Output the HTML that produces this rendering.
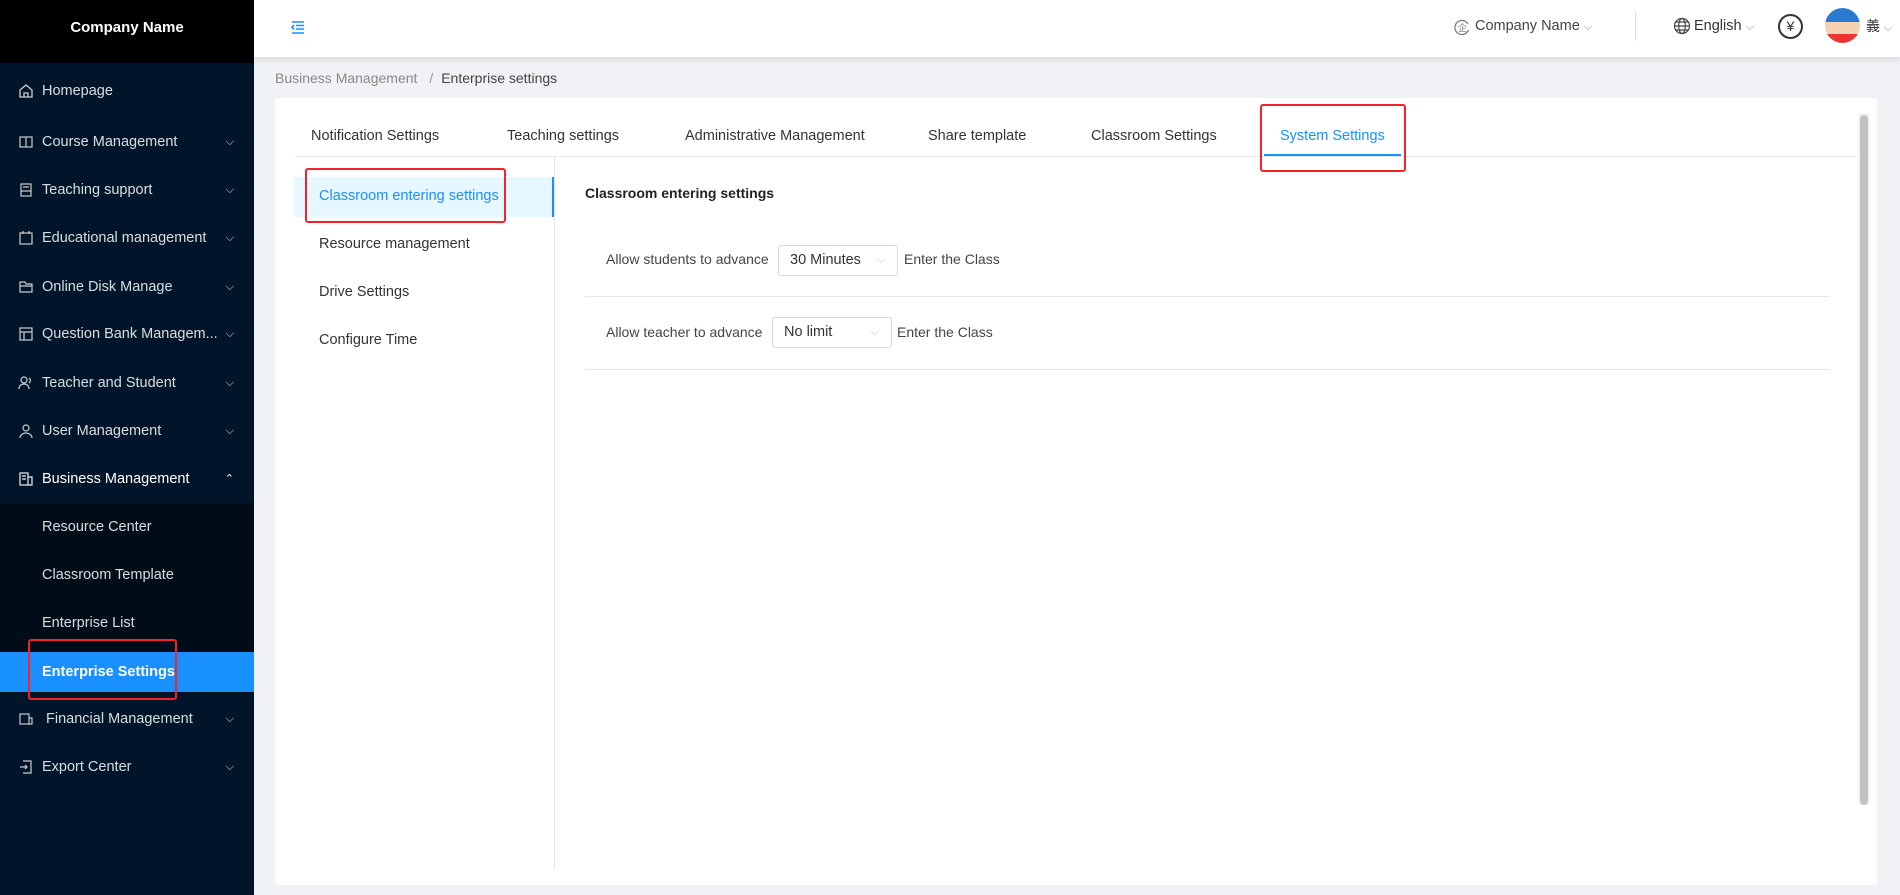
<!DOCTYPE html>
<html><head><meta charset="utf-8"><style>
*{box-sizing:border-box;margin:0;padding:0}
body{width:1900px;height:895px;overflow:hidden;background:#f0f2f5;font-family:"Liberation Sans","Noto Sans CJK SC",sans-serif;font-size:15px;color:#333;position:relative}
.side{position:absolute;left:0;top:0;width:254px;height:895px;background:#001529}
.logo{height:63px;background:#000;color:#fff;text-align:center;line-height:56px;font-size:15px;font-weight:bold}
.mi{position:absolute;left:0;width:254px;height:40px;line-height:40px;color:rgba(255,255,255,.85);font-size:14.5px;padding-left:42px}
.mi svg.ic{position:absolute;left:18px;top:12px}
.mi .ar{position:absolute;right:20px;top:0;font-size:11px}
.sub{position:absolute;left:0;top:503px;width:254px;height:191px;background:#000c17}
.sel{background:#1890ff;color:#fff;font-weight:bold}
.top{position:absolute;left:254px;top:0;right:0;height:57px;background:#fff;box-shadow:0 2px 6px rgba(0,0,0,.12)}
.abs{position:absolute;white-space:nowrap}
.card{position:absolute;left:275px;top:98px;width:1602px;height:787px;background:#fff;border-radius:3px}
.red{position:absolute;border:2px solid #f5222d;border-radius:3px}
.sel2{position:absolute;height:31px;border:1px solid #d9d9d9;border-radius:3px;font-size:14.5px;line-height:29px;padding-left:11px;color:#333}
.sel2 span{position:absolute;right:12px;color:#bbb;font-size:11px}
.tab{position:absolute;top:30px;font-size:14.5px;color:#333;white-space:nowrap}
</style></head><body>
<div class="side">
<div class="logo">Company Name</div>
<div class="sub"></div>
<div class="mi" style="top:71px"><svg class="ic" width="16" height="16" viewBox="0 0 16 16" fill="none" stroke="#ccc" stroke-width="1.3"><path d="M2 7L8 2l6 5v7H2z M6 14v-4h4v4"/></svg>Homepage</div>
<div class="mi" style="top:122px"><svg class="ic" width="16" height="16" viewBox="0 0 16 16" fill="none" stroke="#ccc" stroke-width="1.2"><rect x="2" y="3" width="12" height="10"/><path d="M8 3v10"/></svg>Course Management<span class="ar">⌵</span></div>
<div class="mi" style="top:170px"><svg class="ic" width="16" height="16" viewBox="0 0 16 16" fill="none" stroke="#ccc" stroke-width="1.2"><rect x="3" y="2" width="10" height="12"/><path d="M3 9h10M5 5h6"/></svg>Teaching support<span class="ar">⌵</span></div>
<div class="mi" style="top:218px"><svg class="ic" width="16" height="16" viewBox="0 0 16 16" fill="none" stroke="#ccc" stroke-width="1.2"><rect x="2" y="3" width="12" height="11"/><path d="M5 1v3M11 1v3"/></svg>Educational management<span class="ar">⌵</span></div>
<div class="mi" style="top:267px"><svg class="ic" width="16" height="16" viewBox="0 0 16 16" fill="none" stroke="#ccc" stroke-width="1.2"><path d="M2 3h5l1 2h6v8H2z M2 7h12"/></svg>Online Disk Manage<span class="ar">⌵</span></div>
<div class="mi" style="top:314px"><svg class="ic" width="16" height="16" viewBox="0 0 16 16" fill="none" stroke="#ccc" stroke-width="1.2"><rect x="2" y="2" width="12" height="12"/><path d="M2 6h12M6 6v8"/></svg>Question Bank Managem...<span class="ar">⌵</span></div>
<div class="mi" style="top:363px"><svg class="ic" width="16" height="16" viewBox="0 0 16 16" fill="none" stroke="#ccc" stroke-width="1.2"><circle cx="6" cy="5" r="3"/><path d="M1 14c0-3 2-5 5-5s5 2 5 5M11 3a3 3 0 010 5"/></svg>Teacher and Student<span class="ar">⌵</span></div>
<div class="mi" style="top:411px"><svg class="ic" width="16" height="16" viewBox="0 0 16 16" fill="none" stroke="#ccc" stroke-width="1.2"><circle cx="8" cy="5" r="3"/><path d="M2 15c0-3 3-5 6-5s6 2 6 5"/></svg>User Management<span class="ar">⌵</span></div>
<div class="mi" style="top:459px;color:#fff"><svg class="ic" width="16" height="16" viewBox="0 0 16 16" fill="none" stroke="#eee" stroke-width="1.2"><rect x="2" y="2" width="8" height="12"/><path d="M10 6h4v8h-4M4 5h4M4 8h4"/></svg>Business Management<span class="ar">⌃</span></div>
<div class="mi" style="top:507px">Resource Center</div>
<div class="mi" style="top:555px">Classroom Template</div>
<div class="mi" style="top:603px">Enterprise List</div>
<div class="mi sel" style="top:652px">Enterprise Settings</div>
<div class="mi" style="top:699px"><svg class="ic" width="16" height="16" viewBox="0 0 16 16" fill="none" stroke="#ccc" stroke-width="1.2"><rect x="2" y="3" width="9" height="10"/><path d="M11 7h3v6h-3"/></svg>&nbsp;Financial Management<span class="ar">⌵</span></div>
<div class="mi" style="top:747px"><svg class="ic" width="16" height="16" viewBox="0 0 16 16" fill="none" stroke="#ccc" stroke-width="1.2"><path d="M5 2h8v12H5M2 8h7M7 6l2 2-2 2"/></svg>Export Center<span class="ar">⌵</span></div>
<div class="red" style="left:28px;top:639px;width:149px;height:61px"></div>
</div>
<div class="top">
<svg class="abs" style="left:37px;top:21px" width="14" height="13" viewBox="0 0 14 13" fill="none" stroke="#1890ff" stroke-width="1.6"><path d="M1 1h12M5 4.5h8M5 8h8M1 12h12M3 4l-2 2.2 2 2.2"/></svg>
<svg class="abs" style="left:1199px;top:18px" width="18" height="18" viewBox="0 0 18 18" fill="none" stroke="#777" stroke-width="1.2"><path d="M15 6a7 7 0 10.5 6"/><text x="5" y="13" font-size="9" fill="#777" stroke="none">企</text></svg>
<div class="abs" style="left:1221px;top:18px;font-size:14.5px;color:#444">Company Name <span style="font-size:11px;color:#888">⌵</span></div>
<div class="abs" style="left:1381px;top:11px;width:1px;height:30px;background:#ddd"></div>
<svg class="abs" style="left:1419px;top:17px" width="18" height="18" viewBox="0 0 18 18" fill="none" stroke="#444" stroke-width="1.2"><circle cx="9" cy="9" r="7.5"/><ellipse cx="9" cy="9" rx="3.3" ry="7.5"/><path d="M1.5 9h15M3 5h12M3 13h12"/></svg>
<div class="abs" style="left:1440px;top:18px;font-size:14.5px;color:#333">English <span style="font-size:11px;color:#888">⌵</span></div>
<div class="abs" style="left:1524px;top:14px;width:25px;height:25px;border:2px solid #333;border-radius:50%;text-align:center;line-height:21px;font-size:14px;color:#333">¥</div>
<div class="abs" style="left:1571px;top:8px;width:35px;height:35px;border-radius:50%;background:linear-gradient(#2a7ad0 0 40%,#f2d2b0 40% 75%,#e33 75%)"></div>
<div class="abs" style="left:1612px;top:16px;font-size:14px;color:#333">義 <span style="font-size:11px;color:#888">⌵</span></div>
</div>
<div class="abs" style="left:275px;top:70px;font-size:14px;color:#888">Business Management <span style="margin:0 8px;color:#999">/</span><span style="color:#444">Enterprise settings</span></div>
<div class="card">
<div class="tab" style="left:36px">Notification Settings</div>
<div class="tab" style="left:232px">Teaching settings</div>
<div class="tab" style="left:410px">Administrative Management</div>
<div class="tab" style="left:653px">Share template</div>
<div class="tab" style="left:816px">Classroom Settings</div>
<div class="tab" style="left:1005px;color:#1890ff">System Settings</div>
<div class="abs" style="left:20px;top:58px;width:1562px;height:1px;background:#e8e8e8"></div>
<div class="abs" style="left:989px;top:56px;width:137px;height:2px;background:#1890ff"></div>
<div class="red" style="left:985px;top:6px;width:146px;height:68px"></div>
<div class="abs" style="left:19px;top:79px;width:261px;height:40px;background:#e6f7ff;border-right:3px solid #1890ff"></div>
<div class="abs" style="left:279px;top:59px;width:1px;height:713px;background:#e8e8e8"></div>
<div class="abs" style="left:44px;top:90px;font-size:14.5px;color:#1890ff">Classroom entering settings</div>
<div class="abs" style="left:44px;top:138px;font-size:14.5px;color:#333">Resource management</div>
<div class="abs" style="left:44px;top:186px;font-size:14.5px;color:#333">Drive Settings</div>
<div class="abs" style="left:44px;top:234px;font-size:14.5px;color:#333">Configure Time</div>
<div class="red" style="left:30px;top:70px;width:201px;height:55px"></div>
<div class="abs" style="left:310px;top:87px;font-size:14px;font-weight:bold;color:#222">Classroom entering settings</div>
<div class="abs" style="left:331px;top:153px;font-size:14px;color:#444">Allow students to advance</div>
<div class="sel2" style="left:503px;top:147px;width:120px">30 Minutes<span>⌵</span></div>
<div class="abs" style="left:629px;top:153px;font-size:14px;color:#444">Enter the Class</div>
<div class="abs" style="left:310px;top:198px;width:1245px;height:1px;background:#e8e8e8"></div>
<div class="abs" style="left:331px;top:226px;font-size:14px;color:#444">Allow teacher to advance</div>
<div class="sel2" style="left:497px;top:219px;width:120px">No limit<span>⌵</span></div>
<div class="abs" style="left:622px;top:226px;font-size:14px;color:#444">Enter the Class</div>
<div class="abs" style="left:310px;top:271px;width:1245px;height:1px;background:#e8e8e8"></div>
<div class="abs" style="left:1583px;top:15px;width:12px;height:692px;background:#f4f4f4"></div>
<div class="abs" style="left:1585px;top:17px;width:8px;height:690px;background:#c1c1c1;border-radius:4px"></div>
</div>
</body></html>
